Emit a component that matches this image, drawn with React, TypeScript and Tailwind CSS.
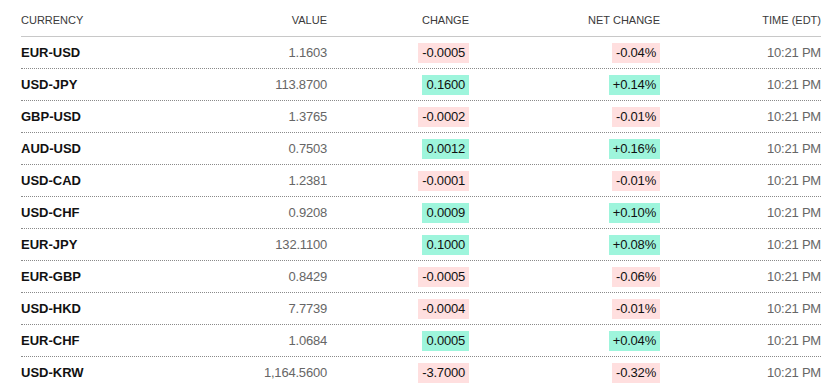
const ROWS = [
  { pair: 'EUR-USD', value: '1.1603', change: '-0.0005', net: '-0.04%', time: '10:21 PM' },
  { pair: 'USD-JPY', value: '113.8700', change: '0.1600', net: '+0.14%', time: '10:21 PM' },
  { pair: 'GBP-USD', value: '1.3765', change: '-0.0002', net: '-0.01%', time: '10:21 PM' },
  { pair: 'AUD-USD', value: '0.7503', change: '0.0012', net: '+0.16%', time: '10:21 PM' },
  { pair: 'USD-CAD', value: '1.2381', change: '-0.0001', net: '-0.01%', time: '10:21 PM' },
  { pair: 'USD-CHF', value: '0.9208', change: '0.0009', net: '+0.10%', time: '10:21 PM' },
  { pair: 'EUR-JPY', value: '132.1100', change: '0.1000', net: '+0.08%', time: '10:21 PM' },
  { pair: 'EUR-GBP', value: '0.8429', change: '-0.0005', net: '-0.06%', time: '10:21 PM' },
  { pair: 'USD-HKD', value: '7.7739', change: '-0.0004', net: '-0.01%', time: '10:21 PM' },
  { pair: 'EUR-CHF', value: '1.0684', change: '0.0005', net: '+0.04%', time: '10:21 PM' },
  { pair: 'USD-KRW', value: '1,164.5600', change: '-3.7000', net: '-0.32%', time: '10:21 PM' },
]

/* red for losses, mint for gains */
const Badge = ({ text }: { text: string }) => {
  const down = text.startsWith('-')
  return (
    <span className={`inline-block h-5 px-1 leading-5 text-[#111] ${down ? 'bg-[#ffdfdf]' : 'bg-[#9ef5dc]'}`}>
      {text}
    </span>
  )
}

export default function App() {
  return (
    <div className="w-[837px] h-[386px] overflow-hidden bg-white" style={{ fontFamily: '"Liberation Sans", Arial, sans-serif' }}>
      <div className="ml-[21px] w-[800px]">
        {/* header */}
        <div className="grid grid-cols-[200px_106px_142px_191px_1fr] h-[37px] pt-1 items-center border-b border-[#c8c8c8] text-[11px] uppercase text-[#3a3a3a]">
          <div>Currency</div>
          <div className="text-right">Value</div>
          <div className="text-right">Change</div>
          <div className="text-right">Net Change</div>
          <div className="text-right">Time (EDT)</div>
        </div>

        {ROWS.map((r) => (
          <div
            key={r.pair}
            className="grid grid-cols-[200px_106px_142px_191px_1fr] h-[32px] items-center border-b border-dotted border-[#8a8a8a] text-[13px] tracking-[-0.2px]"
          >
            <div className="font-bold text-[#111] tracking-normal">{r.pair}</div>
            <div className="text-right text-[#666]">{r.value}</div>
            <div className="text-right">
              <Badge text={r.change} />
            </div>
            <div className="text-right">
              <Badge text={r.net} />
            </div>
            <div className="text-right text-[#666]">{r.time}</div>
          </div>
        ))}
      </div>
    </div>
  )
}
